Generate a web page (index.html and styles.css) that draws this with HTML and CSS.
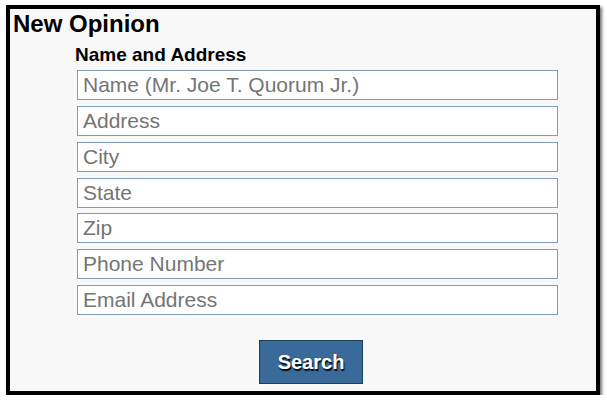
FILE: index.html
```html
<!DOCTYPE html>
<html lang="en">
<head>
    <meta charset="UTF-8">
    <title>New Opinion</title>
    <link rel="stylesheet" href="styles.css">
</head>
<body>

<div class="panel">
    <h1>New Opinion</h1>

    <!-- Name and address fields -->
    <div class="section">
        <h2>Name and Address</h2>
        <input type="text" placeholder="Name (Mr. Joe T. Quorum Jr.)">
        <input type="text" placeholder="Address">
        <input type="text" placeholder="City">
        <input type="text" placeholder="State">
        <input type="text" class="tight" placeholder="Zip">
        <input type="text" placeholder="Phone Number">
        <input type="text" placeholder="Email Address">
    </div>

    <button class="search-btn">Search</button>
</div>

</body>
</html>
```

FILE: styles.css
```css
* {
    margin: 0;
    padding: 0;
    box-sizing: border-box;
}

body {
    font-family: 'Liberation Sans', Arial, sans-serif;
    background: #fff;
}

.panel {
    margin: 5px 0 0 6px;
    width: 594px;
    height: 390px;
    border: 4px solid #000;
    background: #f8f8f8;
    box-shadow: 2px 2px 3px rgba(0, 0, 0, 0.55);
    padding: 1px 0 0 3px;
}

h1 {
    font-size: 24px;
    line-height: 28px;
    font-weight: bold;
    color: #000;
}

.section {
    margin: 6px 0 0 62px;
    width: 484px;
}

h2 {
    font-size: 19px;
    line-height: 22px;
    font-weight: bold;
    color: #000;
    margin-bottom: 4px;
}

.section input {
    display: block;
    margin-left: 2px;
    width: 481px;
    height: 30px;
    margin-bottom: 6px;
    padding: 0 5px;
    border: 1px solid #7f9db9;
    background: #fff;
    font-family: 'Liberation Sans', Arial, sans-serif;
    font-size: 21px;
    color: #333;
    outline: none;
}

.section input.tight {
    margin-top: -1px;
}

.section input::placeholder {
    color: #757575;
}

.search-btn {
    display: block;
    margin: 25px 0 0 246px;
    width: 104px;
    height: 44px;
    background: #3a6a9a;
    border: 1px solid #17435f;
    color: #fff;
    font-family: 'Liberation Sans', Arial, sans-serif;
    font-size: 20px;
    font-weight: bold;
    text-shadow: 1px 2px 1px rgba(0, 0, 0, 0.9);
    cursor: pointer;
}
```
